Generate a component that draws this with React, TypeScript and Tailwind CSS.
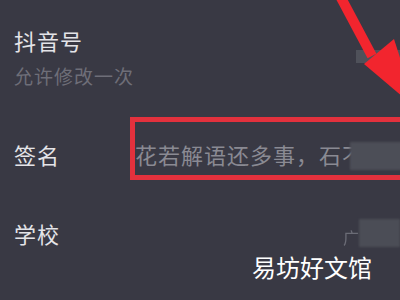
import React from 'react';

const font = { fontFamily: '"Noto Sans CJK SC", "Noto Sans", sans-serif' };

export default function App() {
  return (
    <div className="relative w-[400px] h-[300px] overflow-hidden bg-[#393944]" style={font}>
      {/* 抖音号 */}
      <div className="flex pl-[14px] pt-[26px]">
        <div className="flex flex-col">
          <span className="text-[22px] leading-[28px] tracking-[1px] text-[#e4e4e8]">抖音号</span>
          <span className="mt-[10px] text-[19px] leading-[24px] tracking-[1px] text-[#6e6e78]">允许修改一次</span>
        </div>
        <div className="ml-auto mt-[24px] w-[44px] h-[13px] bg-[#4f515a]" />
      </div>

      {/* 签名 */}
      <div className="flex items-start pl-[14px] mt-[29px]">
        <span className="mt-[23px] w-[116px] shrink-0 text-[22px] leading-[28px] tracking-[1px] text-[#e4e4e8]">签名</span>
        <div className="flex items-start w-[290px] shrink-0 h-[63px] border-[5px] border-r-0 border-[#e3313d]">
          <span className="mt-[18px] whitespace-nowrap text-[22px] leading-[28px] tracking-[1px] text-[#8a8a93]">花若解语还多事，石不</span>
        </div>
      </div>

      {/* 学校 */}
      <div className="flex items-start pl-[14px] mt-[37px]">
        <span className="mt-[2px] text-[22px] leading-[28px] tracking-[1px] text-[#e4e4e8]">学校</span>
        <div className="ml-auto flex items-end w-[57px] h-[30px]">
          <span className="text-[16px] leading-[20px] text-[#6b6c76] blur-[0.5px]">广</span>
          <div className="flex-1 h-[28px] bg-[#4b4d56] blur-[1px]" />
        </div>
      </div>

      {/* blurred tail of the signature */}
      <div className="absolute left-[350px] top-[142px] w-[52px] h-[28px] bg-[#4c4e57] blur-[1px]" />

      {/* red arrow */}
      <svg className="absolute left-[320px] top-0" width="80" height="110" viewBox="0 0 80 110">
        <line x1="19" y1="-6" x2="52" y2="56" stroke="#f2252e" strokeWidth="10" />
        <polygon points="44,64 74,39 96,108" fill="#f2252e" />
      </svg>

      {/* watermark */}
      <span className="absolute left-[252px] top-[252px] text-[24px] leading-[30px] text-white">易坊好文馆</span>
    </div>
  );
}
